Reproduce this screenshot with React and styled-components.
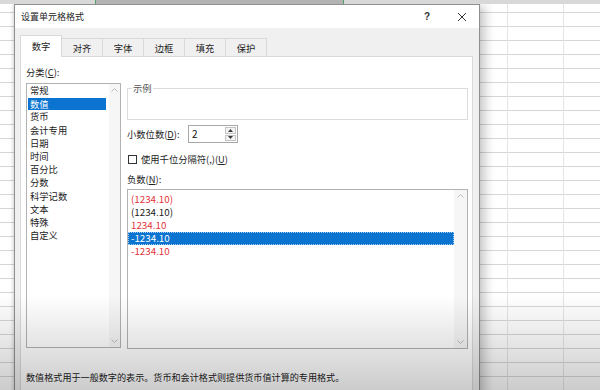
import styled, { createGlobalStyle } from "styled-components";

const GlobalStyle = createGlobalStyle`
  html, body { margin: 0; padding: 0; }
  body {
    width: 600px;
    height: 390px;
    overflow: hidden;
    font-family: "Noto Sans CJK SC", "Noto Sans", sans-serif;
    color: #1b1b1b;
  }
`;

const categories = ["常规", "数值", "货币", "会计专用", "日期", "时间", "百分比", "分数", "科学记数", "文本", "特殊", "自定义"];
const negatives = [
  { text: "(1234.10)", red: true },
  { text: "(1234.10)", red: false },
  { text: "1234.10", red: true },
  { text: "-1234.10", red: false, selected: true },
  { text: "-1234.10", red: true },
];
const tabs = ["数字", "对齐", "字体", "边框", "填充", "保护"];

const Screen = styled.div`
  position: relative;
  width: 600px;
  height: 390px;
  overflow: hidden;
  background-color: #fff;
  background-image:
    linear-gradient(to right, transparent 507px, #e4e4e4 507px, #e4e4e4 508px, transparent 508px, transparent 563px, #e4e4e4 563px, #e4e4e4 564px, transparent 564px),
    linear-gradient(to bottom, transparent 12px, #d6d6d6 12px, #d6d6d6 13px, transparent 13px);
  background-size: 100% 100%, 100% 14px;
`;

const ColumnHeads = styled.div`
  display: flex;
  height: 4px;
`;

const HeadCell = styled.div`
  flex: ${(p) => (p.$w ? `0 0 ${p.$w}px` : "1")};
  background: ${(p) => (p.$selected ? "#b3b3b3" : "#d8d8d8")};
  border-right: ${(p) => (p.$edge ? "1px solid #5c9c74" : "none")};
`;

const Desk = styled.div`
  padding-left: 14px;
`;

const Dialog = styled.div`
  width: 466px;
  height: 400px;
  box-sizing: border-box;
  border: 1px solid #8f8f8f;
  background: #f0f0f0;
  box-shadow: 5px 2px 10px rgba(0, 0, 0, 0.22), -1px 0 3px rgba(0, 0, 0, 0.12);
  display: flex;
  flex-direction: column;
`;

const TitleBar = styled.div`
  height: 23px;
  background: #fff;
  display: flex;
  align-items: center;
  padding: 0 5px 0 6px;
`;

const Title = styled.div`
  flex: 1;
  font-size: 9px;
  line-height: 12px;
  color: #222;
`;

const TitleButton = styled.div`
  width: 24px;
  height: 20px;
  display: flex;
  align-items: center;
  justify-content: center;
  font-family: "Liberation Sans", sans-serif;
  font-size: 10px;
  font-weight: bold;
  color: #333;
  margin-left: ${(p) => p.$gap || 0}px;
`;

const Body = styled.div`
  flex: 1;
  display: flex;
  flex-direction: column;
  padding: 7px 6px 0 5px;
`;

const TabRow = styled.div`
  display: flex;
  align-items: flex-end;
  height: 21px;
  position: relative;
  z-index: 1;
`;

const Tab = styled.div`
  width: 42px;
  height: ${(p) => (p.$active ? 22 : 18)}px;
  margin-bottom: ${(p) => (p.$active ? -1 : 0)}px;
  margin-left: ${(p) => (p.$first ? 0 : -1)}px;
  box-sizing: border-box;
  border: 1px solid #d9d9d9;
  border-bottom: none;
  background: ${(p) => (p.$active ? "#fff" : "#f0f0f0")};
  display: flex;
  align-items: center;
  justify-content: center;
  padding-bottom: ${(p) => (p.$active ? 2 : 0)}px;
  font-size: 9.3px;
  color: #222;
`;

const Panel = styled.div`
  flex: 1;
  background: #fff;
  border: 1px solid #d9d9d9;
  padding: 9px 4px 0 5px;
`;

const Columns = styled.div`
  display: grid;
  grid-template-columns: 95px 341px;
  grid-template-rows: auto auto;
  column-gap: 6px;
`;

const Label = styled.div`
  font-size: 9.3px;
  line-height: 12px;
  color: #222;
  margin-top: ${(p) => p.$top || 0}px;
  margin-bottom: ${(p) => p.$bottom || 0}px;
  white-space: nowrap;
  u { text-underline-offset: 1px; }
`;

const ListBox = styled.div`
  grid-column: ${(p) => p.$col || "auto"};
  height: ${(p) => p.$h}px;
  box-sizing: border-box;
  border: 1px solid #b2b2b2;
  display: flex;
  background: #fff;
`;

const Items = styled.div`
  flex: 1;
  padding: ${(p) => p.$pad};
`;

const Item = styled.div`
  height: ${(p) => p.$h}px;
  line-height: ${(p) => p.$h}px;
  margin: ${(p) => p.$margin || 0};
  padding-left: ${(p) => p.$indent}px;
  font-size: ${(p) => p.$size || 9.3}px;
  white-space: nowrap;
  color: ${(p) => (p.$selected ? "#fff" : p.$red ? "#e3343a" : "#222")};
  background: ${(p) => (p.$selected ? "#0a74d0" : "transparent")};
  outline: ${(p) => (p.$focus ? "1px dotted #a9cdf0" : "none")};
  outline-offset: -1px;
`;

const ScrollBar = styled.div`
  width: ${(p) => p.$w}px;
  background: #f6f6f6;
  display: flex;
  flex-direction: column;
  justify-content: space-between;
  align-items: center;
  padding: 4px 0;
`;

const RightStack = styled.div`
  display: flex;
  flex-direction: column;
`;

const Sample = styled.fieldset`
  margin: 0;
  padding: 0;
  height: 37px;
  box-sizing: border-box;
  border: 1px solid #dcdcdc;
  min-width: 0;
  legend {
    margin-left: 4px;
    padding: 0 1px;
    font-size: 9.3px;
    line-height: 10px;
    color: #555;
  }
`;

const SpinRow = styled.div`
  display: flex;
  align-items: center;
  height: 18px;
  margin-top: 5px;
`;

const SpinLabel = styled(Label)`
  width: 61px;
`;

const Spinner = styled.div`
  width: 50px;
  height: 18px;
  box-sizing: border-box;
  border: 1px solid #a8a8a8;
  display: flex;
  background: #fff;
`;

const SpinValue = styled.div`
  flex: 1;
  padding-left: 3px;
  font-size: 10px;
  line-height: 16px;
  color: #111;
`;

const SpinButtons = styled.div`
  width: 11px;
  display: flex;
  flex-direction: column;
  gap: 1px;
  padding: 1px 1px 1px 0;
`;

const SpinButton = styled.div`
  flex: 1;
  border: 1px solid #c4c4c4;
  background: #f3f3f3;
  display: flex;
  align-items: center;
  justify-content: center;
`;

const CheckRow = styled.div`
  display: flex;
  align-items: center;
  gap: 4px;
  height: 12px;
  margin-top: 10px;
`;

const CheckBox = styled.div`
  width: 9px;
  height: 9px;
  margin-left: 1px;
  box-sizing: border-box;
  border: 1px solid #333;
  background: #fff;
`;

const Description = styled.div`
  margin-top: 22px;
  font-size: 9.1px;
  line-height: 12px;
  color: #222;
  white-space: nowrap;
`;

const Fade = styled.div`
  position: absolute;
  left: 0;
  right: 0;
  bottom: 0;
  height: 95px;
  pointer-events: none;
  background: linear-gradient(to bottom, rgba(0, 0, 0, 0), rgba(0, 0, 0, 0.2));
`;

const Chevron = ({ down }) => (
  <svg width="7" height="4" viewBox="0 0 7 4">
    <polyline
      points={down ? "0.5,0.5 3.5,3.5 6.5,0.5" : "0.5,3.5 3.5,0.5 6.5,3.5"}
      fill="none"
      stroke="#bcbcbc"
      strokeWidth="1"
    />
  </svg>
);

const Triangle = ({ down }) => (
  <svg width="5" height="3" viewBox="0 0 5 3">
    <polygon points={down ? "0,0 5,0 2.5,3" : "0,3 5,3 2.5,0"} fill="#3a3a3a" />
  </svg>
);

export default function App() {
  return (
    <>
      <GlobalStyle />
      <Screen>
        <ColumnHeads>
          <HeadCell $w={95} $edge />
          <HeadCell $w={247} $selected $edge />
          <HeadCell />
        </ColumnHeads>
        <Desk>
          <Dialog>
            <TitleBar>
              <Title>设置单元格格式</Title>
              <TitleButton>?</TitleButton>
              <TitleButton $gap={11}>
                <svg width="10" height="10" viewBox="0 0 10 10">
                  <path d="M1 1 L9 9 M9 1 L1 9" stroke="#333" strokeWidth="1" />
                </svg>
              </TitleButton>
            </TitleBar>
            <Body>
              <TabRow>
                {tabs.map((t, i) => (
                  <Tab key={t} $active={i === 0} $first={i === 0}>
                    {t}
                  </Tab>
                ))}
              </TabRow>
              <Panel>
                <Columns>
                  <Label $bottom={5}>
                    分类(<u>C</u>):
                  </Label>
                  <div />
                  <ListBox $h={265}>
                    <Items $pad="0 3px 0 1px">
                      {categories.map((c, i) => (
                        <Item key={c} $h={i === 1 ? 12 : 13.2} $margin={i === 1 ? "0.6px 0" : 0} $indent={2} $selected={i === 1}>
                          {c}
                        </Item>
                      ))}
                    </Items>
                    <ScrollBar $w={11}>
                      <Chevron />
                      <Chevron down />
                    </ScrollBar>
                  </ListBox>
                  <RightStack>
                    <Sample>
                      <legend>示例</legend>
                    </Sample>
                    <SpinRow>
                      <SpinLabel>
                        小数位数(<u>D</u>):
                      </SpinLabel>
                      <Spinner>
                        <SpinValue>2</SpinValue>
                        <SpinButtons>
                          <SpinButton>
                            <Triangle />
                          </SpinButton>
                          <SpinButton>
                            <Triangle down />
                          </SpinButton>
                        </SpinButtons>
                      </Spinner>
                    </SpinRow>
                    <CheckRow>
                      <CheckBox />
                      <Label>
                        使用千位分隔符(,)(<u>U</u>)
                      </Label>
                    </CheckRow>
                    <Label $top={8} $bottom={4}>
                      负数(<u>N</u>):
                    </Label>
                    <ListBox $h={160}>
                      <Items $pad="3px 0 0 0">
                        {negatives.map((n, i) => (
                          <Item
                            key={i}
                            $h={12.9}
                            $indent={3}
                            $size={9.8}
                            $red={n.red}
                            $selected={n.selected}
                            $focus={n.selected}
                          >
                            {n.text}
                          </Item>
                        ))}
                      </Items>
                      <ScrollBar $w={13}>
                        <Chevron />
                        <Chevron down />
                      </ScrollBar>
                    </ListBox>
                  </RightStack>
                </Columns>
                <Description>
                  数值格式用于一般数字的表示。货币和会计格式则提供货币值计算的专用格式。
                </Description>
              </Panel>
            </Body>
          </Dialog>
        </Desk>
        <Fade />
      </Screen>
    </>
  );
}
